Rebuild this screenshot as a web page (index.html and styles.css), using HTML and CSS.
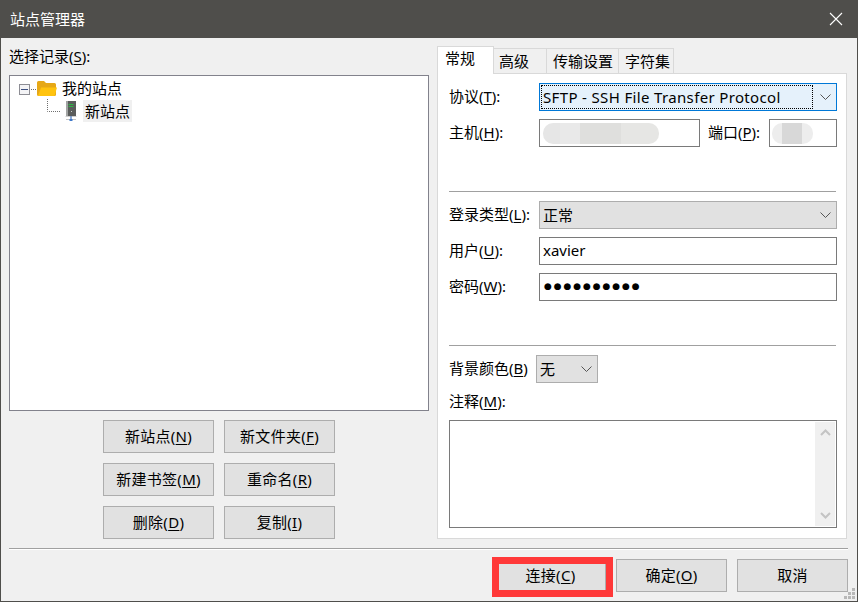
FILE: index.html
```html
<!DOCTYPE html>
<html lang="zh-CN">
<head>
<meta charset="utf-8">
<title>站点管理器</title>
<link rel="stylesheet" href="styles.css">
</head>
<body>
<div class="window">
  <header class="titlebar">
    <span class="title">站点管理器</span>
    <svg class="close" width="14" height="14" viewBox="0 0 14 14"><path d="M1 1l12 12M13 1L1 13" stroke="#fff" stroke-width="1.1" fill="none"/></svg>
  </header>
  <div class="main">
    <section class="left">
      <div class="left-label">选择记录(<u>S</u>):</div>
      <div class="tree">
        <div class="tree-row root-row">
          <svg class="expander" width="18" height="11" viewBox="0 0 18 11">
            <rect x="0.5" y="0.5" width="10" height="10" fill="#f4f4f6" stroke="#8d8d94"/>
            <path d="M2 5.5h7" stroke="#3d4f80" stroke-width="1"/>
            <path d="M12 5.5h5" stroke="#6f6f6f" stroke-dasharray="1 1"/>
          </svg>
          <svg class="folder" width="20" height="17" viewBox="0 0 20 17">
            <path d="M0 2.500Q0 1 1.500 1H7L9 3H17.500Q19 3 19 4.500V7H0Z" fill="#e6a817"/>
            <path d="M0 6H4L5.500 5H19V6.500L19 14.500Q19 16 17.500 16H1.500Q0 16 0 14.500Z" fill="#e6a817"/>
            <path d="M1 16L4 7.500H20L17.500 16Z" fill="#ffc30f"/>
          </svg>
          <span class="node-text">我的站点</span>
        </div>
        <div class="tree-row site-row">
          <svg class="connector" width="18" height="14" viewBox="0 0 18 14">
            <path d="M0.500 0V12.500H13" stroke="#6f6f6f" stroke-dasharray="1 1" fill="none"/>
          </svg>
          <svg class="server" width="13" height="21" viewBox="0 0 13 21">
            <rect x="1" y="0" width="10" height="15" fill="#5a5c5b"/>
            <rect x="1" y="0" width="2" height="15" fill="#a2a4a3"/>
            <path d="M3.500 3.500h5M3.500 5.500h5" stroke="#2fb344"/>
            <rect x="6" y="10" width="1" height="1" fill="#c9d0c9"/>
            <path d="M0.500 15.500h11" stroke="#d0d0d0"/>
            <path d="M6 15v4" stroke="#5d87c7" stroke-width="1.400"/>
            <path d="M1 18.500h10" stroke="#c4c4c4"/>
            <path d="M4.500 18h3v2h-3z" fill="#3f78c9"/>
          </svg>
          <span class="node-text selected">新站点</span>
        </div>
      </div>
      <div class="left-buttons">
        <button class="btn">新站点(<u>N</u>)</button>
        <button class="btn">新文件夹(<u>F</u>)</button>
        <button class="btn">新建书签(<u>M</u>)</button>
        <button class="btn">重命名(<u>R</u>)</button>
        <button class="btn">删除(<u>D</u>)</button>
        <button class="btn">复制(<u>I</u>)</button>
      </div>
    </section>
    <section class="right">
      <nav class="tabs">
        <span class="tab active">常规</span>
        <span class="tab tab-adv">高级</span>
        <span class="tab tab-trans">传输设置</span>
        <span class="tab tab-char">字符集</span>
      </nav>
      <div class="panel">
        <div class="row">
          <label class="lbl">协议(<u>T</u>):</label>
          <div class="field select focus grow">
            <span class="focus-text">SFTP - SSH File Transfer Protocol</span>
            <svg class="chev" width="11" height="6" viewBox="0 0 11 6"><path d="M0.500 0.500L5.500 5.500L10.500 0.500" fill="none" stroke="#555"/></svg>
          </div>
        </div>
        <div class="row">
          <label class="lbl">主机(<u>H</u>):</label>
          <div class="field input host">
            <span class="blur blur-host"></span>
          </div>
          <label class="lbl port-lbl">端口(<u>P</u>):</label>
          <div class="field input port">
            <span class="blur blur-port"></span>
          </div>
        </div>
        <hr class="sep sep-first">
        <div class="row">
          <label class="lbl">登录类型(<u>L</u>):</label>
          <div class="field select grow">
            <span class="value">正常</span>
            <svg class="chev" width="11" height="6" viewBox="0 0 11 6"><path d="M0.500 0.500L5.500 5.500L10.500 0.500" fill="none" stroke="#555"/></svg>
          </div>
        </div>
        <div class="row">
          <label class="lbl">用户(<u>U</u>):</label>
          <div class="field input grow"><span class="value">xavier</span></div>
        </div>
        <div class="row">
          <label class="lbl">密码(<u>W</u>):</label>
          <div class="field input grow"><span class="value pw">●●●●●●●●●●</span></div>
        </div>
        <hr class="sep sep-second">
        <div class="row">
          <label class="lbl lbl-bg">背景颜色(<u>B</u>)</label>
          <div class="field select bgcolor">
            <span class="value">无</span>
            <svg class="chev" width="11" height="6" viewBox="0 0 11 6"><path d="M0.500 0.500L5.500 5.500L10.500 0.500" fill="none" stroke="#555"/></svg>
          </div>
        </div>
        <label class="lbl note-lbl">注释(<u>M</u>):</label>
        <div class="notes">
          <div class="scrollbar">
            <svg width="11" height="7" viewBox="0 0 11 7"><path d="M1 6L5.500 1.500L10 6" fill="none" stroke="#c4c4c4" stroke-width="2"/></svg>
            <svg width="11" height="7" viewBox="0 0 11 7"><path d="M1 1L5.500 5.500L10 1" fill="none" stroke="#c4c4c4" stroke-width="2"/></svg>
          </div>
        </div>
      </div>
    </section>
  </div>
  <hr class="footer-sep">
  <footer class="footer">
    <div class="connect-wrap">
      <button class="btn footer-btn">连接(<u>C</u>)</button>
      <span class="highlight"></span>
    </div>
    <button class="btn footer-btn">确定(<u>O</u>)</button>
    <button class="btn footer-btn">取消</button>
    <svg class="grip" width="11" height="11" viewBox="0 0 11 11" fill="#b8b8b8">
      <rect x="8" y="0" width="3" height="3"/>
      <rect x="4" y="4" width="3" height="3"/><rect x="8" y="4" width="3" height="3"/>
      <rect x="0" y="8" width="3" height="3"/><rect x="4" y="8" width="3" height="3"/><rect x="8" y="8" width="3" height="3"/>
    </svg>
  </footer>
</div>
</body>
</html>
```

FILE: styles.css
```css
* { box-sizing: border-box; }

html, body {
  margin: 0;
  padding: 0;
  background: #f0f0f0;
}

body {
  width: 858px;
  height: 602px;
  overflow: hidden;
  font-family: "Noto Sans", "Noto Sans CJK SC", sans-serif;
  font-size: 15px;
  color: #000;
}

u { text-underline-offset: 2px; }

.window {
  width: 858px;
  height: 602px;
  display: flex;
  flex-direction: column;
  background: #f0f0f0;
  border: 1px solid #4f4e4b;
  border-top: 0;
}

.titlebar {
  height: 38px;
  flex: none;
  margin: 0 -1px;
  padding: 0 15px 0 10px;
  background: #4f4e4b;
  color: #fff;
  display: flex;
  align-items: center;
  justify-content: space-between;
}

.title { line-height: 38px; }

.main {
  flex: none;
  height: 509px;
  display: flex;
  padding-left: 8px;
  column-gap: 8px;
}

.left { width: 420px; }

.left-label {
  height: 37px;
  line-height: 37px;
}

.tree {
  height: 336px;
  background: #fff;
  border: 1px solid #82828c;
  padding-top: 3px;
}

.tree-row { display: flex; }

.root-row {
  height: 18px;
  padding-left: 9px;
  align-items: center;
}

.expander { margin-top: 3px; }

.root-row .node-text { margin-left: 5px; }

.site-row {
  height: 22px;
  margin-top: 3px;
  padding-left: 37px;
  align-items: center;
}

.connector {
  align-self: flex-start;
  margin-top: -1px;
}

.node-text {
  line-height: 22px;
  white-space: nowrap;
}

.selected {
  margin-left: 5px;
  padding: 0 2px;
  background: #f0f0f0;
}

.left-buttons {
  margin: 9px 0 0 94px;
  display: grid;
  grid-template-columns: 111px 111px;
  grid-auto-rows: 33px;
  gap: 10px;
}

.btn {
  width: 111px;
  height: 33px;
  padding: 0 0 2px;
  background: #e1e1e1;
  border: 1px solid #adadad;
  border-radius: 0;
  font: inherit;
  letter-spacing: 0.3px;
  color: #000;
  white-space: nowrap;
}

.right { width: 410px; }

.tabs {
  height: 35px;
  padding-top: 8px;
  display: flex;
  align-items: flex-end;
  position: relative;
  z-index: 1;
}

.tab {
  height: 25px;
  background: #f0f0f0;
  border: 1px solid #d9d9d9;
  border-left: 0;
  border-bottom: 0;
  line-height: 25px;
  white-space: nowrap;
}

.tab.active {
  width: 57px;
  height: 28px;
  padding-left: 7px;
  background: #fff;
  border-left: 1px solid #d9d9d9;
  margin-bottom: -1px;
  line-height: 23px;
}

.tab-adv { width: 53px; padding-left: 5px; }
.tab-trans { width: 72px; padding-left: 6px; }
.tab-char { width: 55px; padding-left: 6px; }

.panel {
  height: 466px;
  background: #fff;
  border: 1px solid #d9d9d9;
  padding: 9px 9px 0 11px;
  display: flex;
  flex-direction: column;
}

.row {
  height: 28px;
  flex: none;
  margin-bottom: 8px;
  display: flex;
  align-items: center;
}

.lbl {
  width: 90px;
  flex: none;
  padding-bottom: 4px;
  white-space: nowrap;
}

.port-lbl {
  width: 61px;
  margin-left: 8px;
}

.lbl-bg { width: 87px; }

.field {
  height: 28px;
  display: flex;
  align-items: center;
  padding: 0 3px;
  white-space: nowrap;
}

.value { padding-bottom: 2px; }

.grow { flex: 1; }

.input {
  background: #fff;
  border: 1px solid #7a7a7a;
}

.select {
  background: #e1e1e1;
  border: 1px solid #adadad;
  justify-content: space-between;
  padding-right: 5px;
}

.select.focus {
  background: #e5f1fb;
  border-color: #0078d7;
  padding-left: 2px;
}

.focus-text {
  flex: 1;
  margin-right: 8px;
  outline: 1px dotted #000;
  line-height: 22px;
  padding-left: 1px;
  letter-spacing: 0.35px;
}

.host { width: 161px; }
.port { width: 68px; padding: 0 1px; }

.blur {
  display: block;
  height: 21px;
  border-radius: 10px;
}

.blur-host {
  width: 116px;
  background: linear-gradient(90deg, #e6e6e6 0 15%, #e9e9e9 15% 32%, #dfdfdd 32% 67%, #e6e6e4 67%);
}

.blur-port {
  width: 41px;
  margin-left: 1px;
  background: linear-gradient(90deg, #ededed 0 24%, #d8d8d8 24% 72%, #ededed 72%);
}

.pw {
  margin-left: 1px;
  font-family: "DejaVu Sans", sans-serif;
  font-size: 9px;
  letter-spacing: 1.9px;
}

.bgcolor { width: 62px; }

.sep {
  flex: none;
  width: 387px;
  height: 1px;
  border: 0;
  background: #a0a0a0;
  margin: 36px 0 9px;
}

.note-lbl {
  height: 20px;
  padding-bottom: 0;
  line-height: 20px;
}

.notes {
  flex: none;
  margin-top: 9px;
  width: 388px;
  height: 108px;
  background: #fff;
  border: 1px solid #7a7a7a;
  padding: 1px;
  display: flex;
  justify-content: flex-end;
}

.scrollbar {
  width: 20px;
  background: #f0f0f0;
  display: flex;
  flex-direction: column;
  justify-content: space-between;
  align-items: center;
  padding: 7px 0;
}

.scrollbar svg { display: block; }

.footer-sep {
  flex: none;
  width: 839px;
  height: 2px;
  margin: 1px 0 0 8px;
  border: 0;
  border-top: 1px solid #a0a0a0;
  border-bottom: 1px solid #fff;
}

.footer {
  flex: 1;
  position: relative;
  display: flex;
  justify-content: flex-end;
  align-items: flex-start;
  column-gap: 10px;
  padding: 9px 9px 0 0;
}

.connect-wrap {
  position: relative;
  width: 111px;
  height: 33px;
}

.highlight {
  position: absolute;
  left: -3px;
  top: -2px;
  width: 121px;
  height: 40px;
  border: 7px solid #ff3838;
  pointer-events: none;
}

.grip {
  position: absolute;
  right: 2px;
  bottom: 2px;
}
```
